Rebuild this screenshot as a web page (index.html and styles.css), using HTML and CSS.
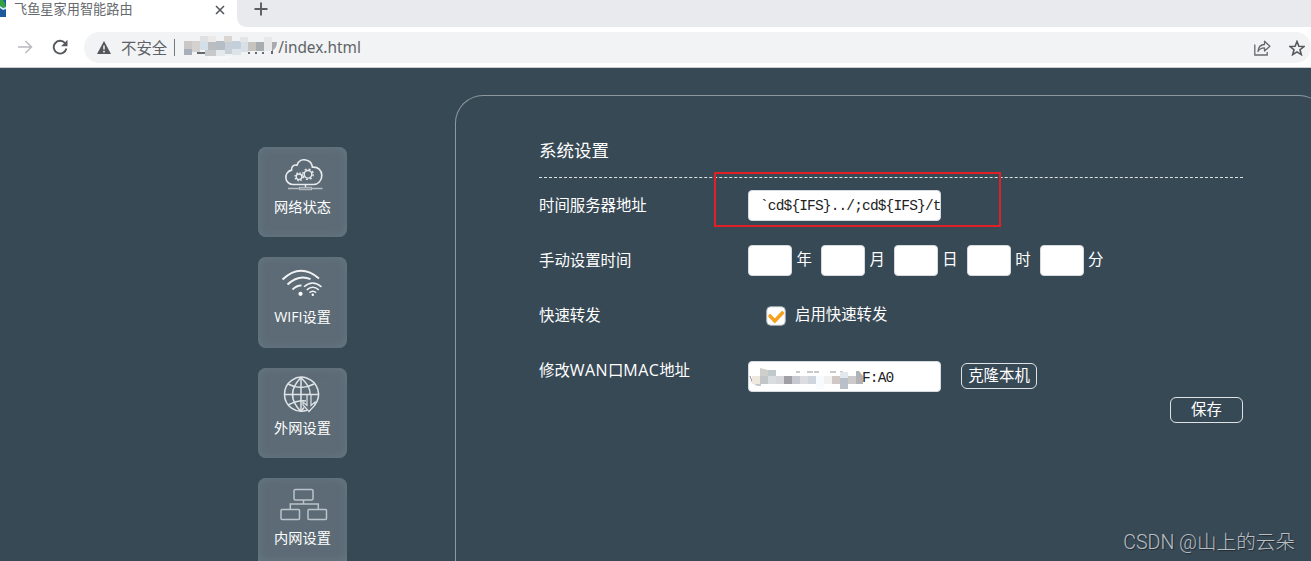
FILE: index.html
```
<!DOCTYPE html>
<html lang="zh">
<head>
    <meta charset="UTF-8">
    <title>飞鱼星家用智能路由</title>
    <link rel="stylesheet" href="styles.css">
</head>
<body>

    <header class="browser">
        <div class="tabs">
            <div class="tab">
                <svg class="favicon" width="6" height="17" viewBox="0 0 6 17">
                    <rect width="6" height="17" fill="#1c5a9c"/>
                    <path d="M0 0h3q3 3 3 7l-3 1-3-2z" fill="#35a043"/>
                    <path d="M0 6l3 2 3-1v2l-3 1-3-2z" fill="#d6eef0"/>
                </svg>
                <span class="tab-title">飞鱼星家用智能路由</span>
                <svg class="tab-close" width="10" height="10" viewBox="0 0 10 10"><path d="M1 1l8 8M9 1l-8 8" stroke="#55595d" stroke-width="1.6"/></svg>
            </div>
            <div class="tab-rest">
                <svg width="14" height="14" viewBox="0 0 14 14"><path d="M7 .5v13M.5 7h13" stroke="#5a5d61" stroke-width="1.9"/></svg>
            </div>
        </div>
        <div class="toolbar">
            <svg class="forward" width="16" height="16" viewBox="0 0 16 16" fill="none" stroke="#b9bbbe" stroke-width="1.5"><path d="M1 8h13M8.500 2l6 6-6 6"/></svg>
            <svg class="reload" width="16" height="16" viewBox="0 0 16 16"><path d="M13 4A6.400 6.400 0 1 0 14.400 9.500" fill="none" stroke="#55595d" stroke-width="1.9"/><path d="M15.500.8v6.400H9.100z" fill="#55595d"/></svg>
            <div class="address">
                <svg class="warn" width="14" height="13" viewBox="0 0 14 13"><path d="M7 0l7 13H0z" fill="#54585c"/><path d="M7 4.500v4M7 9.800v1.600" stroke="#f1f3f4" stroke-width="1.500"/></svg>
                <span>不安全</span>
                <span class="bar"></span>
                <svg class="mosaic" width="95" height="26" viewBox="0 0 95 26">
                    <path d="M14 17h8v2h-8zM40 17h4v2h-4zM65 17h2v2h-2zM72 17h2v2h-2zM79 17h2v2h-2zM88 9h2v10h-2z" fill="#66696d"/>
                    <g>
                        <path d="M1 6h8v8H1z" fill="#cac7c6"/><path d="M1 14h8v6H1z" fill="#a9afba"/>
                        <path d="M9 6h8v11H9z" fill="#d4d1cf"/><path d="M17 1h8v6h-8z" fill="#dfe0e1"/>
                        <path d="M17 7h8v8h-8z" fill="#d3dfe9"/><path d="M25 1h8v6h-8z" fill="#eceae8"/>
                        <path d="M25 7h8v8h-8z" fill="#bbbdc1"/><path d="M22 15h11v6H22z" fill="#c8c9ca"/>
                        <path d="M33 6h9v9h-9z" fill="#b5bdc5"/><path d="M33 15h9v6h-9z" fill="#e5e9ee"/>
                        <path d="M41 1h8v6h-8z" fill="#d9d6d1"/><path d="M42 7h8v12h-8z" fill="#c8cfd7"/>
                        <path d="M49 6h9v8h-9z" fill="#c3d0db"/><path d="M49 14h9v6h-9z" fill="#dce3e9"/>
                        <path d="M57 2h8v5h-8z" fill="#e5e5e5"/><path d="M58 7h7v10h-7z" fill="#d7dfe7"/>
                        <path d="M65 7h8v9h-8z" fill="#c7c4c0"/><path d="M73 7h8v9h-8z" fill="#a8adb1"/>
                        <path d="M81 2h8v14h-8z" fill="#e7e8e9"/><path d="M89 7h5q0 6-5 9z" fill="#aaa9b0"/>
                        <path d="M25 21h24l-4 4H25z" fill="#f7f7f7"/>
                    </g>
                </svg>
                <span>/index.html</span>
                <svg class="share" width="17" height="16" viewBox="0 0 17 16" fill="none" stroke="#66696d" stroke-width="1.300"><path d="M.8 4.500v10.500h12.400v-3"/><path d="M4 11.500C4.300 6.800 7 4.700 10.500 4.500V1.200l5.400 5.100-5.400 4.800V7.900C7.700 7.800 5.700 8.800 4 11.500z" stroke-linejoin="round"/></svg>
                <svg class="star" width="16" height="16" viewBox="0 0 16 16"><path d="M8 1.500l1.900 4.700 5 .3-3.900 3.200 1.300 4.900L8 11.900l-4.300 2.700L5 9.700 1.100 6.500l5-.3z" fill="none" stroke="#55595d" stroke-width="1.600"/></svg>
            </div>
        </div>
    </header>

    <main class="page">
        <nav class="menu">
            <a class="menu-item">
                <svg width="50" height="40" viewBox="-1.500 0 50 40" fill="none" stroke="#e8ecee" stroke-width="1.600">
                    <path d="M13 27.500a7.300 7.300 0 0 1-1-14.400C11.500 9 15 7.300 17.500 8.200 19 3.500 23 2.200 26.500 3c4 .8 6 3.800 6.400 7.200 5.500-.8 9.400 3.200 9.400 8.300 0 5.500-3.800 9-8.300 9z"/>
                    <circle cx="19.500" cy="19.800" r="2.800" stroke-width="1.300"/><circle cx="19.500" cy="19.800" r="4" stroke-width="1.300" stroke-dasharray="1.500 1.640"/>
                    <circle cx="28.500" cy="17.300" r="3.800" stroke-width="1.400"/><circle cx="28.500" cy="17.300" r="5.200" stroke-width="1.400" stroke-dasharray="2 2.080"/>
                    <path d="M26 28v3" stroke-width="1.500"/>
                    <path d="M8.500 31.500h11.500M32 31.500h11" stroke="#b8c0c6" stroke-width="1.300"/><rect x="20" y="30.300" width="12" height="2.400" fill="#8d99a1" stroke="#b8c0c6" stroke-width="1"/>
                </svg>
                <span>网络状态</span>
            </a>
            <a class="menu-item">
                <svg width="50" height="40" viewBox="1 0 50 40" fill="none" stroke="#f0f2f4" stroke-width="2">
                    <path d="M5.500 12.500q18-17 36.500-1"/>
                    <path d="M10.500 17.500q11.500-10.500 23-5.300"/>
                    <path d="M15.500 22.500q4.500-4.300 9-4"/>
                    <circle cx="23.500" cy="26.800" r="2.100" fill="#fff" stroke="none"/>
                    <path d="M27 19.800q8.500-7.500 17.500 0M29.800 22.800q6-5 12 0M32.500 25.600q3.300-2.800 6.600 0" stroke-width="1.500"/>
                    <circle cx="35.800" cy="27.800" r="1.200" fill="#fff" stroke="none"/>
                </svg>
                <span>WIFI设置</span>
            </a>
            <a class="menu-item">
                <svg class="globe" width="50" height="40" viewBox="2 0 50 40" fill="none" stroke="#dfe4e7" stroke-width="1.500">
                    <path d="M38.800 26.800A17 17 0 1 0 31 32.300"/>
                    <path d="M25 -.5v33.500M8 16.500h34M12 6q13 7 26 0M12 27q10-5 18-4"/>
                    <path d="M25-.5q-17 17 0 34M25-.5q10 10 9 16.500M25 33.500l3-4"/>
                    <path d="M31 16.500v11l-4-3.500v3l6 6.500 6-6.500v-3l-4 3.500v-11z" stroke-width="1.200"/>
                </svg>
                <span>外网设置</span>
            </a>
            <a class="menu-item last">
                <svg width="50" height="40" viewBox="1 0 50 40" fill="none" stroke="#bcc4c9" stroke-width="1.500">
                    <rect x="17" y="1.500" width="19" height="10.500" rx="1.500"/>
                    <rect x="4" y="21.500" width="18.500" height="10" rx="1"/>
                    <rect x="31" y="21.500" width="18.500" height="10" rx="1"/>
                    <path d="M26.500 12v4M13.300 21.500V16h28v5.500"/>
                </svg>
                <span>内网设置</span>
            </a>
        </nav>

        <section class="panel">
            <h1 class="panel-title">系统设置</h1>

            <div class="row">
                <span class="label">时间服务器地址</span>
                <div class="field wide server">`cd${IFS}../;cd${IFS}/t</div>
                <div class="highlight"></div>
            </div>

            <div class="row">
                <span class="label">手动设置时间</span>
                <div class="time">
                    <div class="field short"></div><span class="unit">年</span>
                    <div class="field short"></div><span class="unit">月</span>
                    <div class="field short"></div><span class="unit">日</span>
                    <div class="field short"></div><span class="unit">时</span>
                    <div class="field short"></div><span class="unit">分</span>
                </div>
            </div>

            <div class="row">
                <span class="label">快速转发</span>
                <svg class="check" width="20" height="20" viewBox="0 0 20 20"><rect x=".7" y=".7" width="18.600" height="18.600" rx="4" fill="#fff" stroke="#a9b1b7"/><path d="M4 10l4.800 5L16.300 7" fill="none" stroke="#f7a01d" stroke-width="3.600" stroke-linecap="round"/></svg>
                <span class="check-text">启用快速转发</span>
            </div>

            <div class="row mac-row">
                <span class="label">修改<span class="latin">WAN</span>口<span class="latin">MAC</span>地址</span>
                <div class="field wide mac">
                    <svg class="mosaic" width="114" height="24" viewBox="0 0 114 24">
                        <path d="M1 10l3 8M47 6h4M58 6h6M65 6h5M81 6h6M91 6h3" stroke="#8f9397" stroke-width="1"/>
                        <path d="M3 10h8v8H3z" fill="#efe8df"/><path d="M5 18h7v2H8z" fill="#c3cacd"/>
                        <path d="M11 2l8 2v6h-8z" fill="#cfcfcd"/><path d="M19 4h8v6h-8z" fill="#c0c9cb"/>
                        <path d="M11 10h8v8h-8z" fill="#c2c6c9"/><path d="M19 10h8v8h-8z" fill="#d9dddf"/>
                        <path d="M27 10h8v8h-8z" fill="#d6d7da"/><path d="M35 10h8v8h-8z" fill="#a19fa6"/>
                        <path d="M43 10h8v8h-8z" fill="#c7c8d0"/><path d="M51 10h8v8h-8z" fill="#dcdde1"/>
                        <path d="M59 10h8v8h-8z" fill="#cfd5dd"/><path d="M67 10h8v13h-8z" fill="#f8fbfe"/>
                        <path d="M75 10h8v8h-8z" fill="#f2f1f0"/><path d="M83 10h8v8h-8z" fill="#cfc8c5"/>
                        <path d="M91 6h8v6h-8z" fill="#e3e8ec"/><path d="M91 12h8v11h-8z" fill="#b9c0c9"/>
                        <path d="M99 10h8v8h-8z" fill="#cbc9ca"/><path d="M107 5h3l4 5v8h-7z" fill="#b0b2b6"/>
                    </svg>
                    <span>F:A0</span>
                </div>
                <button class="btn clone">克隆本机</button>
            </div>

            <div class="actions">
                <button class="btn save">保存</button>
            </div>
        </section>
    </main>

    <div class="watermark">CSDN @山上的云朵</div>

</body>
</html>
```
FILE: styles.css
```
* {
    box-sizing: border-box;
}

body {
    margin: 0;
    height: 561px;
    overflow: hidden;
    position: relative;
    background: #384956;
    color: #fff;
    font-family: "Open Sans", "Noto Sans CJK SC", sans-serif;
    font-size: 15.4px;
}

svg {
    display: block;
    flex: none;
}

/* browser bar */
.browser {
    height: 68px;
    background: #fff;
    border-bottom: 1px solid #c9ced3;
}

.tabs {
    display: flex;
    height: 27px;
    background: #fff;
}

.tab {
    display: flex;
    width: 237px;
    height: 19px;
    align-items: center;
    color: #66696d;
    font-size: 13.2px;
    line-height: 19px;
}

.favicon {
    margin-right: 8px;
    align-self: flex-start;
}

.tab-title {
    width: 201px;
    white-space: nowrap;
}

.tab-rest {
    flex: 1;
    padding: 2px 0 0 17px;
    background: #e8eaed;
    border-bottom-left-radius: 9px;
}

.toolbar {
    display: flex;
    height: 40px;
    align-items: center;
    padding-left: 17px;
}

.reload {
    margin: 0 16px 0 19px;
}

.address {
    display: flex;
    flex: 1;
    height: 31px;
    align-items: center;
    padding: 0 6px 0 13px;
    margin-top: 1px;
    background: #f1f3f4;
    border-radius: 16px;
    color: #5f6368;
    font-family: "Noto Sans", "Noto Sans CJK SC", sans-serif;
    font-size: 15.4px;
}

.warn {
    margin-right: 10px;
}

.bar {
    width: 1px;
    height: 17px;
    margin: 0 8px 0 7px;
    background: #77797d;
}

.share {
    margin-left: auto;
}

.star {
    margin-left: 18px;
}

/* page */
.page {
    display: flex;
    height: 493px;
    padding: 27px 0 0 258px;
    overflow: hidden;
}

.menu {
    display: flex;
    flex: none;
    flex-direction: column;
    gap: 20px;
    width: 89px;
    margin-right: 108px;
    padding-top: 52px;
}

.menu-item {
    display: flex;
    flex: none;
    flex-direction: column;
    align-items: center;
    height: 90.3px;
    padding-top: 10px;
    border-radius: 8px;
    background: #5c6b76;
    box-shadow: inset 0 0 10px #677984;
    font-size: 14.2px;
    line-height: 20px;
}

.globe {
    overflow: visible;
}

/* runs off the bottom of the window */
.last {
    height: 83px;
    border-radius: 8px 8px 0 0;
}

.panel {
    flex: none;
    width: 872px;
    height: 466px;
    padding: 0 83px;
    border: 1px solid #8d979e;
    border-bottom: none;
    border-radius: 28px 28px 0 0;
}

.panel-title {
    height: 82px;
    margin: 0;
    padding-top: 40px;
    border-bottom: 1px dashed #dfe3e6;
    font-size: 17.5px;
    font-weight: normal;
    line-height: 28px;
}

.row {
    display: flex;
    position: relative;
    height: 54.8px;
    align-items: center;
}

.label {
    width: 209px;
    padding-bottom: 1px;
    white-space: nowrap;
}

.latin {
    font-size: 16px;
    letter-spacing: 0.4px;
}

.field {
    height: 31px;
    background: #fff;
    border: 1px solid #d5dade;
    border-radius: 4px;
    color: #222;
    font-family: "Liberation Mono", monospace;
    font-size: 14.5px;
    letter-spacing: -0.85px;
    line-height: 31px;
    white-space: nowrap;
    overflow: hidden;
}

.wide {
    width: 193px;
}

.server {
    padding-left: 11px;
}

/* red frame around the server address */
.highlight {
    position: absolute;
    left: 175px;
    top: -6px;
    width: 287px;
    height: 55px;
    border: 2px solid #e01f26;
}

.time {
    display: flex;
    align-items: center;
}

.short {
    width: 44px;
}

.unit {
    width: 28.9px;
    padding-left: 4.5px;
    padding-bottom: 3px;
}

.check {
    margin: 3px 9px 0 18px;
}

.check-text {
    padding-bottom: 2px;
}

.mac-row .field {
    position: relative;
    top: 7px;
}

.clone {
    position: relative;
    top: 6px;
}

.mac {
    display: flex;
}

.mac span {
    padding-top: 1px;
}

.mac .mosaic {
    margin-top: 4px;
    margin-right: -1px;
}

.btn {
    height: 26px;
    padding: 0;
    border: 1px solid #dfe3e6;
    border-radius: 6px;
    background: none;
    color: #fff;
    font-family: inherit;
    font-size: 15.4px;
    line-height: 22px;
}

.clone {
    width: 76px;
    margin-left: 20px;
}

.actions {
    display: flex;
    justify-content: flex-end;
}

.save {
    width: 73px;
}

.watermark {
    position: absolute;
    right: 16px;
    bottom: 3px;
    color: #b9bec2;
    font-family: Roboto, "Noto Sans CJK SC", sans-serif;
    font-size: 19.6px;
    font-weight: 300;
    line-height: 30px;
    text-shadow: 1px 1px 1px #222b33;
}
```
